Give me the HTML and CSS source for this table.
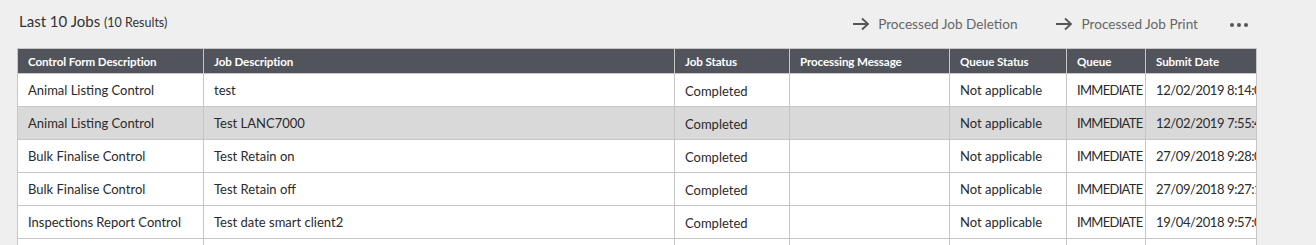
FILE: index.html
```html
<!DOCTYPE html>
<html>
<head>
<meta charset="utf-8">
<link rel="stylesheet" href="styles.css">
</head>
<body>
<div class="page">
  <div class="topbar">
    <h1 class="title">Last 10 Jobs <span class="count">(10 Results)</span></h1>
    <div class="actions">
      <a class="action"><svg class="arrow" width="18" height="14" viewBox="0 0 18 14"><path d="M1 7H16M10 1.5L16 7L10 12.5" fill="none" stroke="#555" stroke-width="1.8"/></svg>Processed Job Deletion</a>
      <a class="action"><svg class="arrow" width="18" height="14" viewBox="0 0 18 14"><path d="M1 7H16M10 1.5L16 7L10 12.5" fill="none" stroke="#555" stroke-width="1.8"/></svg>Processed Job Print</a>
      <span class="more"><i></i><i></i><i></i></span>
    </div>
  </div>
  <table class="grid">
    <colgroup>
      <col class="c1"><col class="c2"><col class="c3"><col class="c4"><col class="c5"><col class="c6"><col class="c7">
    </colgroup>
    <thead>
      <tr><th>Control Form Description</th><th>Job Description</th><th>Job Status</th><th>Processing Message</th><th>Queue Status</th><th>Queue</th><th>Submit Date</th></tr>
    </thead>
    <tbody>
      <tr><td>Animal Listing Control</td><td>test</td><td class="st">Completed</td><td></td><td>Not applicable</td><td class="q">IMMEDIATE</td><td class="d">12/02/2019 8:14:06 AM</td></tr>
      <tr class="sel"><td>Animal Listing Control</td><td>Test LANC7000</td><td class="st">Completed</td><td></td><td>Not applicable</td><td class="q">IMMEDIATE</td><td class="d">12/02/2019 7:55:42 AM</td></tr>
      <tr><td>Bulk Finalise Control</td><td>Test Retain on</td><td class="st">Completed</td><td></td><td>Not applicable</td><td class="q">IMMEDIATE</td><td class="d">27/09/2018 9:28:01 AM</td></tr>
      <tr><td>Bulk Finalise Control</td><td>Test Retain off</td><td class="st">Completed</td><td></td><td>Not applicable</td><td class="q">IMMEDIATE</td><td class="d">27/09/2018 9:27:12 AM</td></tr>
      <tr><td>Inspections Report Control</td><td>Test date smart client2</td><td class="st">Completed</td><td></td><td>Not applicable</td><td class="q">IMMEDIATE</td><td class="d">19/04/2018 9:57:06 AM</td></tr>
      <tr><td>Inspections Report Control</td><td>Test date smart client</td><td class="st">Completed</td><td></td><td>Not applicable</td><td class="q">IMMEDIATE</td><td class="d">19/04/2018 9:50:06 AM</td></tr>
    </tbody>
  </table>
</div>
</body>
</html>
```
FILE: styles.css
```css
html, body {
  margin: 0;
  padding: 0;
  background: #efefef;
  font-family: "Lato", "Liberation Sans", sans-serif;
  color: #333;
  overflow: hidden;
}
.page {
  padding: 0 0 0 17px;
  width: 1239px;
}
.topbar {
  display: flex;
  align-items: center;
  justify-content: space-between;
  height: 48px;
}
.title {
  margin: 0 0 6px 2px;
  font-size: 15px;
  font-weight: 400;
  color: #333;
}
.count {
  font-size: 12.5px;
}
.actions {
  display: flex;
  align-items: center;
  margin-right: 8px;
}
.action {
  display: flex;
  align-items: center;
  font-size: 13.6px;
  color: #666;
  margin-right: 38px;
}
.action:nth-child(2) {
  margin-right: 32px;
}
.arrow {
  margin-right: 8px;
}
.more {
  display: flex;
  gap: 3px;
  padding-top: 1px;
}
.more i {
  display: block;
  width: 4px;
  height: 4px;
  border-radius: 50%;
  background: #555;
}
.grid {
  border-collapse: collapse;
  table-layout: fixed;
  width: 1239px;
  font-size: 13px;
}
.c1 { width: 186px; }
.c2 { width: 471px; }
.c3 { width: 115px; }
.c4 { width: 160px; }
.c5 { width: 117px; }
.c6 { width: 79px; }
.c7 { width: 111px; }
.grid th, .grid td {
  border: 1px solid #c6c6c6;
  white-space: nowrap;
  overflow: hidden;
  text-align: left;
}
.grid th {
  background: #52545b;
  color: #fff;
  font-weight: 700;
  font-size: 11.6px;
  letter-spacing: -0.1px;
  height: 24px;
  padding: 0 10px;
}
.grid td {
  background: #fff;
  height: 32px;
  padding: 0 10px;
  color: #2a2a2a;
}
.grid td.d {
  letter-spacing: -0.4px;
}
.grid td.q {
  letter-spacing: -0.7px;
  padding-right: 2px;
}
.grid td.st {
  padding-top: 2px;
  height: 30px;
}
.grid tr.sel td {
  background: #d9d9d9;
}
```
